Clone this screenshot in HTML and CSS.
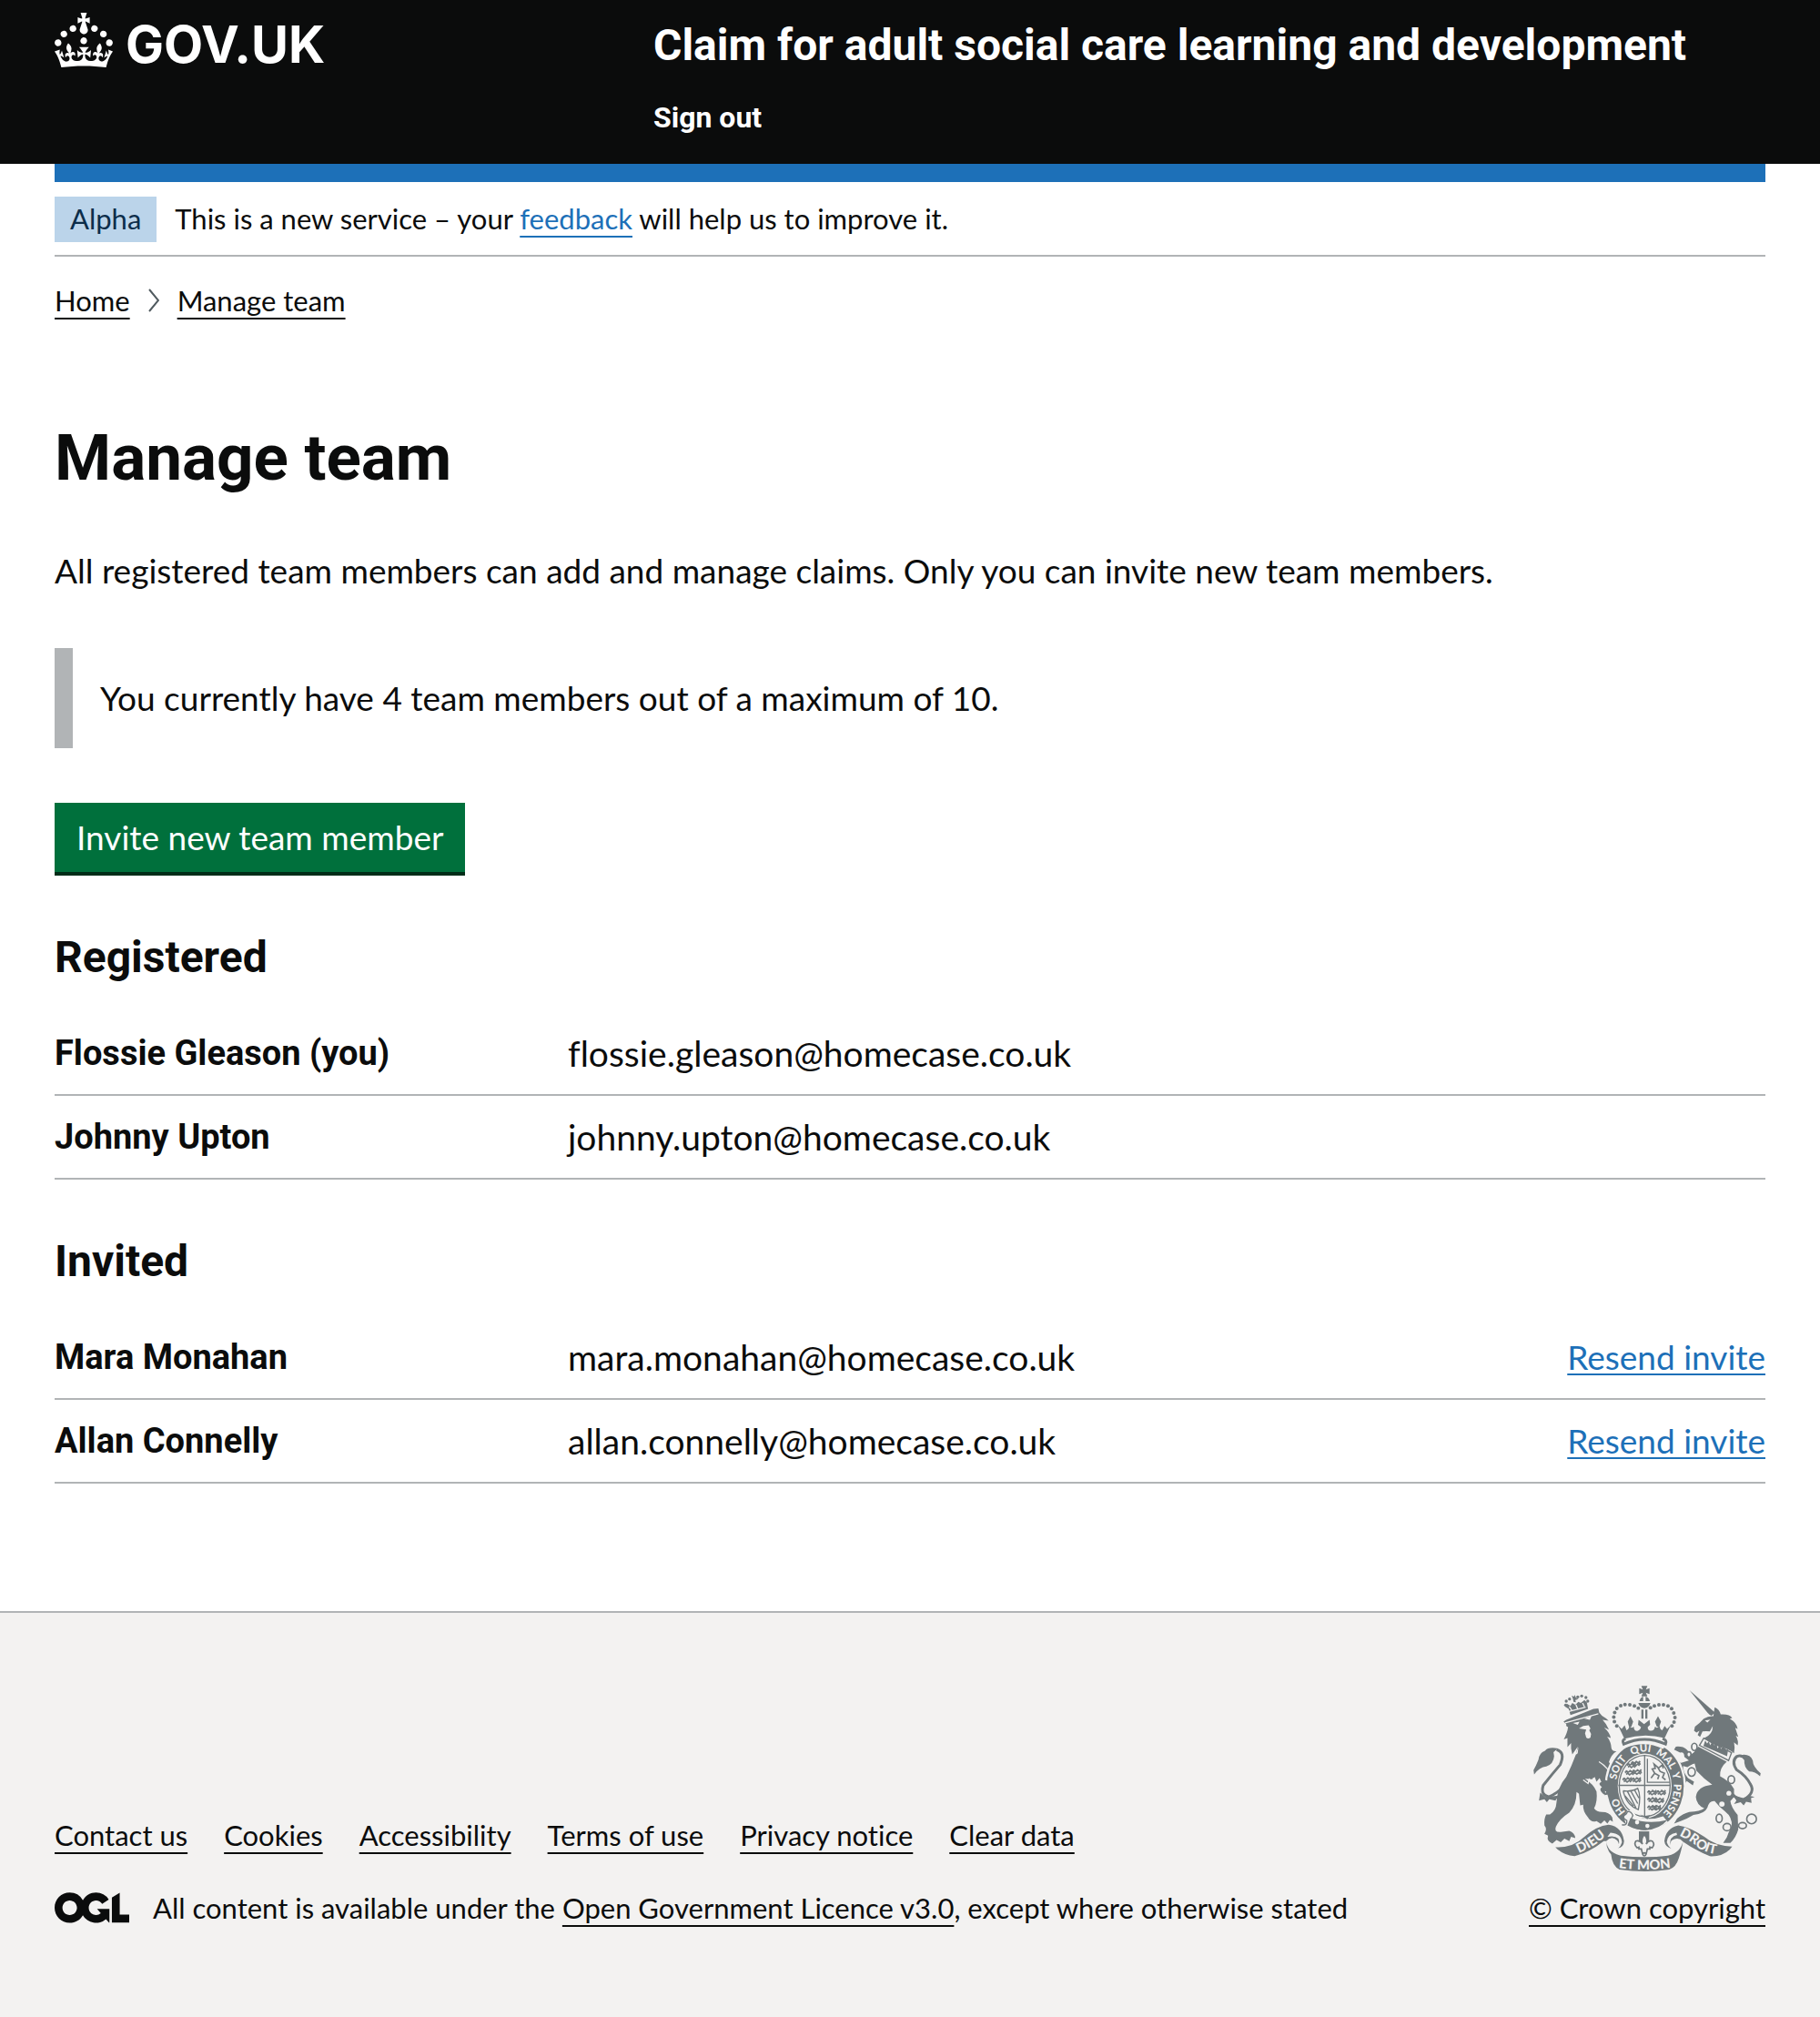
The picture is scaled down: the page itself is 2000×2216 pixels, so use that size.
FILE: index.html
```html
<!DOCTYPE html>
<html lang="en">
<head>
<meta charset="utf-8">
<meta name="viewport" content="width=device-width, initial-scale=1">
<title>Manage team – Claim for adult social care learning and development</title>
<link rel="stylesheet" href="styles.css">
</head>
<body>
<header class="header">
  <div class="header-inner">
    <a class="logo" href="#" aria-label="GOV.UK">
      <svg class="crown" viewBox="0 0 32 30" aria-hidden="true"><path d="M22.6 10.4c-1 .4-2-.1-2.4-1-.4-.9.1-2 1-2.4.9-.4 2 .1 2.4 1s-.1 2-1 2.4m-5.9 6.7c-.9.4-2-.1-2.4-1-.4-.9.1-2 1-2.4.9-.4 2 .1 2.4 1s-.1 2-1 2.4m10.8-3.7c-1 .4-2-.1-2.4-1-.4-.9.1-2 1-2.4.9-.4 2 .1 2.4 1s0 2-1 2.4m3.3 4.8c-1 .4-2-.1-2.4-1-.4-.9.1-2 1-2.4.9-.4 2 .1 2.4 1s-.1 2-1 2.4M17 4.7l2.3 1.2V2.5l-2.3.7-.2-.2.9-3h-3.4l.9 3-.2.2c-.1.1-2.3-.7-2.3-.7v3.4L15 4.7c.1.1.1.2.2.2l-1.3 4c-.1.2-.1.4-.1.6 0 1.1.8 2 1.9 2.2h.7c1-.2 1.9-1.1 1.9-2.1 0-.2 0-.4-.1-.6l-1.3-4c-.1-.2 0-.2.1-.3m-7.6 5.7c.9.4 2-.1 2.4-1 .4-.9-.1-2-1-2.4-.9-.4-2 .1-2.4 1s0 2 1 2.4m-5 3c.9.4 2-.1 2.4-1 .4-.9-.1-2-1-2.4-.9-.4-2 .1-2.4 1s.1 2 1 2.4m-3.2 4.8c.9.4 2-.1 2.4-1 .4-.9-.1-2-1-2.4-.9-.4-2 .1-2.4 1s0 2 1 2.4m14.8 11c4.4 0 8.6.3 12.3.8 1.1-4.5 2.4-7 3.7-8.8l-2.5-.9c.2 1.3.3 1.9 0 2.7-.4-.4-.8-1.1-1.1-2.3l-1.2 4c.7-.5 1.3-.8 2-.9-1.1 2.5-2.6 3.1-3.5 3-1.1-.2-1.7-1.2-1.5-2.1.3-1.2 1.5-1.5 2.1-.1 1.1-2.3-.8-3-2-2.3 1.9-1.9 2.1-3.5.6-5.6-2.1 1.6-2.1 3.2-1.2 5.5-1.2-1.4-3.2-.6-2.5 1.6.9-1.4 2.1-.5 1.9.8-.2 1.1-1.7 2.1-3.5 1.9-2.7-.2-2.9-2.1-2.9-3.6.7-.1 1.9.5 2.9 1.9l.4-4.3c-1.1 1.1-2.1 1.4-3.2 1.4.4-1.2 2.1-3 2.1-3h-5.4s1.7 1.9 2.1 3c-1.1 0-2.1-.2-3.2-1.4l.4 4.3c1-1.4 2.2-2 2.9-1.9-.1 1.5-.2 3.4-2.9 3.6-1.9.2-3.4-.8-3.5-1.9-.2-1.3 1-2.2 1.9-.8.7-2.3-1.2-3-2.5-1.6.9-2.2.9-3.9-1.2-5.5-1.5 2-1.3 3.7.6 5.6-1.2-.7-3.1 0-2 2.3.6-1.4 1.8-1.1 2.1.1.2.9-.3 1.9-1.5 2.1-.9.2-2.4-.5-3.5-3 .6 0 1.2.3 2 .9l-1.2-4c-.3 1.1-.7 1.9-1.1 2.3-.3-.8-.2-1.4 0-2.7l-2.9.9C1.3 23 2.6 25.5 3.7 30c3.7-.5 7.9-.8 12.3-.8"/></svg>
      <span class="logo-text">GOV.UK</span>
    </a>
    <div class="header-content">
      <a class="service-name" href="#">Claim for adult social care learning and development</a>
      <nav aria-label="Account"><a class="sign-out" href="#">Sign out</a></nav>
    </div>
  </div>
</header>

<div class="width-container">
  <div class="phase-banner">
    <strong class="tag">Alpha</strong>
    <span>This is a new service – your <a class="link thick" href="#">feedback</a> will help us to improve it.</span>
  </div>
  <nav class="breadcrumbs" aria-label="Breadcrumb">
    <a class="link dark thick" href="#">Home</a>
    <svg class="chevron" viewBox="0 0 12 26" aria-hidden="true"><path d="M1 1l10 12L1 25"/></svg>
    <a class="link dark thick" href="#">Manage team</a>
  </nav>

  <main class="main">
    <h1 class="title">Manage team</h1>
    <p class="body">All registered team members can add and manage claims. Only you can invite new team members.</p>
    <div class="inset">You currently have 4 team members out of a maximum of 10.</div>
    <button class="button" type="button">Invite new team member</button>

    <h2 class="subtitle">Registered</h2>
    <table class="members">
      <tbody>
        <tr><th scope="row">Flossie Gleason (you)</th><td class="email">flossie.gleason@homecase.co.uk</td><td class="action"></td></tr>
        <tr><th scope="row">Johnny Upton</th><td class="email">johnny.upton@homecase.co.uk</td><td class="action"></td></tr>
      </tbody>
    </table>

    <h2 class="subtitle">Invited</h2>
    <table class="members">
      <tbody>
        <tr><th scope="row">Mara Monahan</th><td class="email">mara.monahan@homecase.co.uk</td><td class="action"><a class="link" href="#">Resend invite</a></td></tr>
        <tr><th scope="row">Allan Connelly</th><td class="email">allan.connelly@homecase.co.uk</td><td class="action"><a class="link" href="#">Resend invite</a></td></tr>
      </tbody>
    </table>
  </main>
</div>

<footer class="footer">
  <div class="footer-inner">
    <div class="footer-meta">
      <ul class="footer-links">
        <li><a class="link dark thick" href="#">Contact us</a></li>
        <li><a class="link dark thick" href="#">Cookies</a></li>
        <li><a class="link dark thick" href="#">Accessibility</a></li>
        <li><a class="link dark thick" href="#">Terms of use</a></li>
        <li><a class="link dark thick" href="#">Privacy notice</a></li>
        <li><a class="link dark thick" href="#">Clear data</a></li>
      </ul>
      <div class="licence">
        <svg class="ogl" viewBox="0 0 483 196" aria-hidden="true"><path d="M421.5 142.8V.1l-50.7 32.3v161.1h112.4v-50.7zm-122.3-9.6A47.12 47.12 0 0 1 221 97.8c0-26 21.1-47.1 47.1-47.1 16.7 0 31.4 8.7 39.7 21.8l42.7-27.2A97.63 97.63 0 0 0 268.1 0c-36.5 0-68.3 20.1-85.1 49.7A98 98 0 0 0 97.8 0C43.9 0 0 43.9 0 97.8s43.9 97.8 97.8 97.8c36.5 0 68.3-20.1 85.1-49.7a97.76 97.76 0 0 0 149.6 25.4l19.4 22.2h3v-87.8h-80l24.3 27.5zM97.8 145c-26 0-47.1-21.1-47.1-47.1s21.1-47.1 47.1-47.1 47.1 21.1 47.1 47.1S123.8 145 97.8 145"/></svg>
        <span>All content is available under the <a class="link dark thick" href="#">Open Government Licence v3.0</a>, except where otherwise stated</span>
      </div>
    </div>
    <div class="copyright">
      <svg class="crest" viewBox="42 35 750 613" aria-hidden="true">
        <defs>
          <path id="garter" d="M410 480A95 113 0 0 1 410 253A95 113 0 0 1 410 480"/>
          <path id="motto-left" d="M180 592Q236 572 290 524"/>
          <path id="motto-right" d="M514 526Q560 546 586 570Q610 588 656 592"/>
          <path id="motto-mid" d="M310 634Q410 650 508 634"/>
          <path id="lion-mark" d="M0 6l6-5 4 4 8-5 6 4 6-6 M4 12l5-4 6 5 7-5 6 5 M2 0l5 4 M16-3l3 6 M27 2l3 8"/>
        </defs>
        <!-- Lion -->
        <path class="ink" d="M150 148Q200 128 240 112L256 110 259 124 268 134Q282 142 290 151L270 148Q282 160 291 180L275 173Q294 190 297 208L285 203Q298 220 299 240Q300 252 316 251Q298 262 291 287Q310 320 320 360L322 390 312 384 302 406Q292 410 290 392Q278 398 270 390 256 376 268 370 252 358 266 353L260 340 250 352 244 336 236 344 212 342Q240 360 250 384 254 416 242 440 250 452 268 452 292 452 302 470L304 484 294 478 286 490 276 480 264 491 250 482Q232 488 222 470 204 450 206 428L196 430 192 392 184 386Q184 430 160 454 128 474 116 500 108 520 132 518L160 514Q178 520 180 538L166 534 160 548 144 540 132 552 118 544 104 556Q84 548 90 530L78 524Q88 508 78 496 76 474 84 460L96 460Q116 450 118 420 120 370 150 336 168 300 182 262L188 236 170 262Q164 244 166 224L154 238 154 208 142 212Q154 190 156 172L150 168 150 162 141 154Z"/>
        <path class="paper" d="M172 158l22-4-6 10zM210 144l24-10-6 14zM192 176l14-8 18-2 6 10-4 6 6 12-2 12q-8 6-14 0l-4-14 4-12zM180 264l10-26-2 20z"/>
        <path class="paper-line thin" d="M146 158L256 128M258 286Q290 305 304 342M206 346l16 12 4-14 10 12 4-16"/>
        <g class="ink-line"><path d="M148 362Q120 392 92 402Q64 396 74 364Q104 326 130 296Q148 254 118 246"/></g>
        <path class="ink" d="M122 242Q90 236 80 250 60 258 58 280 50 300 42 314L44 328Q62 304 84 302 108 294 110 268L108 254zM64 388l16 14 46-4-12 16-20-4-8 10-8-10-18 4z"/>
        <path class="ink" d="M164 132L158 112 146 104 152 94 164 102 170 92 180 98 190 88 198 92 210 82 218 90 222 112z"/>
        <path class="paper-line thin" d="M158 120l56-14M160 104l8 12M182 98l6 14M204 92l6 12"/>
        <g class="ink"><circle cx="148" cy="99" r="5"/><circle cx="150" cy="86" r="5"/><circle cx="161" cy="79" r="5"/><circle cx="188" cy="72" r="5"/><circle cx="201" cy="69" r="5"/><circle cx="215" cy="74" r="5"/><circle cx="221" cy="86" r="5"/><path d="M168 68l8 3 2-6 4 10 8 4-10 3 2 8-8-2-2-10z"/></g>
        <!-- Unicorn -->
        <path class="ink" d="M557 50L641 124 630 134Q622 132 616 124zM640 106Q656 112 660 130Q690 128 698 142L690 144Q714 158 716 178L708 174 718 204 710 200Q720 218 716 232L704 222Q708 240 704 258 690 246 664 238 622 226 606 208 634 196 634 168L624 186Q612 184 600 186L592 204 584 198 590 184 580 190 572 184 575 170Q592 158 604 144 620 134 636 136z"/>
        <path class="paper" d="M608 150l18-3-10 10z"/>
        <path class="ink-line thin" d="M604 208L696 256L686 282L590 232Z"/>
        <path class="ink" d="M603 234l6-18 6 10 6-8 4 14 8-14 6 14 8-6 2 16 8-10 4 12 10-6 8 12 6-6-4 24z"/>
        <path class="ink" d="M586 236L680 286Q656 306 658 334 690 350 704 376L704 402 692 416Q694 436 716 462L718 510Q710 538 692 554L668 554 680 536Q686 518 696 500 700 470 674 450 654 434 640 416 622 414 616 438 608 458 570 462L548 474 528 482 506 490 516 474Q534 458 556 452 592 450 606 440 580 428 578 402 582 368 632 362 606 344 580 316L574 292 560 296 556 278Q566 262 586 236z"/>
        <path class="ink" d="M580 250L560 286 540 270Q540 252 526 256L506 246 512 236Q536 234 548 246L562 262zM576 288L550 304 536 300Q534 318 552 340L572 352 568 364 548 350 542 358 524 346 530 336 514 304 500 294 502 284 530 290 554 282z"/>
        <path class="ink-line" d="M690 380Q704 408 736 412Q776 388 758 360Q744 332 712 312Q694 284 714 268Q730 262 742 278"/>
        <path class="ink" d="M726 264Q756 258 766 282 766 302 792 324L790 334Q774 318 754 318 736 304 738 280zM700 396l12 18-8 12 22-6 10 10 8-12 18 4-2-16 12-4-20-4-18 8z"/>
        <g class="ring"><ellipse cx="573" cy="237" rx="9" ry="12"/><ellipse cx="555" cy="262" rx="7" ry="9"/><ellipse cx="564" cy="320" rx="12" ry="14"/><ellipse cx="695" cy="345" rx="11" ry="13"/><ellipse cx="655" cy="473" rx="10" ry="14"/><ellipse cx="681" cy="502" rx="13" ry="12"/><ellipse cx="732" cy="497" rx="13" ry="10"/><circle cx="762" cy="475" r="16"/></g>
        <g class="paper"><circle cx="687" cy="390" r="8"/><circle cx="664" cy="426" r="9"/></g>
        <!-- Garter and shield -->
        <ellipse class="paper" cx="411" cy="366" rx="134" ry="153"/>
        <ellipse class="ink" cx="411" cy="366" rx="127" ry="146"/>
        <ellipse class="paper" cx="409" cy="366" rx="89" ry="107"/>
        <ellipse class="ink-line thin" cx="409" cy="366" rx="84" ry="101"/>
        <path class="ink-line thin" d="M409 264V468M322 364H494M418 276V354H492"/>
        <g class="charge"><use href="#lion-mark" x="350" y="292"/><use href="#lion-mark" x="364" y="286"/><use href="#lion-mark" x="344" y="316"/><use href="#lion-mark" x="368" y="314"/><use href="#lion-mark" x="336" y="340"/><use href="#lion-mark" x="366" y="340"/><use href="#lion-mark" x="418" y="382"/><use href="#lion-mark" x="448" y="382"/><use href="#lion-mark" x="418" y="406"/><use href="#lion-mark" x="442" y="408"/><use href="#lion-mark" x="418" y="432"/><use href="#lion-mark" x="432" y="432"/><path d="M430 340l12-16-8-14 10-2-4-14 12 10 8 14 14 6-6 14 10 8M442 324l14 8-4 12M456 306l12-10 2 12"/></g>
        <path class="ink-line thin" d="M338 382Q366 386 386 374Q398 400 388 444Q348 430 338 382M352 384l28 54M364 384l22 40M376 380l14 26M344 398l28 34"/>
        <g class="motto garter-motto">
          <text><textPath href="#garter" startOffset="15%">HO</textPath></text>
          <text><textPath href="#garter" startOffset="34%">SOIT</textPath></text>
          <text><textPath href="#garter" startOffset="48%">QUI</textPath></text>
          <text><textPath href="#garter" startOffset="61%">MAL</textPath></text>
          <text><textPath href="#garter" startOffset="70%">Y</textPath></text>
          <text><textPath href="#garter" startOffset="82%">PENSE</textPath></text>
        </g>
        <path class="paper" d="M340 470L352 446 372 448 380 464Q420 484 470 466L486 486 440 516 350 500z"/>
        <path class="ink" d="M362 472Q420 494 484 478Q460 508 412 512Q376 510 352 496zM394 460q16 8 34 2l-10 14z"/>
        <path class="ink-line thin" d="M334 494q18 4 16-14-16-8-8-18 8-2 10-12 14 0 18 14l-6 12"/>
        <g class="paper"><circle cx="384" cy="486" r="7"/><circle cx="418" cy="498" r="7"/></g>
        <path class="ink" d="M272 344l16 6 14 12 18 24-4 12-10-10-4 18-12-12-14 2 6-12-14-4 8-8-12-8z"/>
        <!-- Royal crown -->
        <path class="paper" d="M326 176L490 176 470 206 484 226 470 244Q410 214 346 240L334 226 342 208z"/>
        <path class="ink" d="M321 166l12 12 10-12 6 16q10-4 8-14l10 6 6-4q0 16 14 14 8-2 10-12l-10-8 2-16 18 14 18-14 2 16-8 8q0 12 10 12 12 0 14-14l6 4 10-6q0 12 8 14l8-14 8 10 12-12-20 42Q408 190 342 210z"/>
        <path class="ink" d="M362 136l9 18-6 16h-8l-4-16zM453 136l10 18-6 16h-8l-6-16z"/>
        <path class="ink-line" d="M346 210Q332 214 340 228Q408 196 478 228Q484 214 468 210"/>
        <g class="ink"><circle cx="317" cy="168" r="6"/><circle cx="309" cy="154" r="6"/><circle cx="307" cy="139" r="6"/><circle cx="310" cy="124" r="6"/><circle cx="317" cy="110" r="6"/><circle cx="330" cy="101" r="6"/><circle cx="344" cy="97" r="6"/><circle cx="360" cy="98" r="6"/><circle cx="375" cy="102" r="6"/><circle cx="388" cy="109" r="6"/><circle cx="499" cy="168" r="6"/><circle cx="506" cy="155" r="6"/><circle cx="509" cy="140" r="6"/><circle cx="505" cy="125" r="6"/><circle cx="498" cy="111" r="6"/><circle cx="486" cy="102" r="6"/><circle cx="471" cy="98" r="6"/><circle cx="456" cy="98" r="6"/><circle cx="441" cy="102" r="6"/><circle cx="428" cy="108" r="6"/>
          <path d="M388 92H428Q424 108 408 109Q392 108 388 92zM392 86q2-12 12-15v15zM412 71q12 3 14 15h-14zM398 36h20l-5 12 12-5v20l-12-5 5 12H398l5-12-12 5V43l12 5zM398 114h7v30h-7zM411 114h7v30h-7z"/></g>
        <!-- Ribbon -->
        <path class="ink" d="M114 568Q170 572 210 534 250 498 290 494 334 500 341 548 340 570 318 572 330 560 318 546 300 528 282 548L274 548Q226 586 178 598 138 594 114 568zM698 566Q640 564 606 534 560 502 520 496 478 506 474 548 476 568 500 574 488 560 498 546 520 532 536 550 576 578 624 598 674 600 698 566zM282 548Q286 586 330 596 410 606 486 596 526 588 536 548 530 580 522 604 512 636 490 642 410 654 326 642 302 632 298 592 282 574 282 548z"/>
        <path class="paper" d="M296 520Q332 522 334 552 330 568 312 580 286 572 290 548 304 534 318 550 324 560 314 570 330 560 322 540 310 528 286 534zM514 520Q484 524 482 552 488 570 506 580 532 572 528 552 514 536 500 550 494 560 502 570 488 560 496 540 504 530 516 528z"/>
        <path class="ink" d="M390 516h34v34h-34z"/>
        <path class="emblem" d="M408 526Q394 542 402 558 392 544 380 548 372 560 384 570L390 568 390 574H398L402 590H414L418 574H426V568L434 570Q444 558 434 548 422 544 414 558 422 542 408 526z"/><circle class="emblem" cx="408" cy="592" r="5"/>
        <g class="motto">
          <text><textPath href="#motto-left" startOffset="50%">DIEU</textPath></text>
          <text><textPath href="#motto-mid" startOffset="50%">ET MON</textPath></text>
          <text><textPath href="#motto-right" startOffset="49%">DROIT</textPath></text>
        </g>
      </svg>
      <a class="link dark thick" href="#">© Crown copyright</a>
    </div>
  </div>
</footer>
</body>
</html>
```
FILE: styles.css
```css
* { box-sizing: border-box; }

body {
  margin: 0;
  display: flex;
  flex-direction: column;
  min-height: 100vh;
  background: #fff;
  color: #0b0c0c;
  font-family: Lato, "Liberation Sans", Arial, sans-serif;
  font-size: 37px;
  font-variant-ligatures: none;
  line-height: 50px;
}

.service-name,
.sign-out,
.title,
.subtitle,
.members th {
  font-family: Roboto, "Liberation Sans", Arial, sans-serif;
  font-weight: 700;
}

.header {
  background: #0b0c0c;
  color: #fff;
}

.header a {
  color: #fff;
  text-decoration: none;
}

.header-inner {
  display: grid;
  grid-template-columns: 35% 1fr;
  min-height: 180px;
  margin: 0 60px;
}

.logo {
  display: flex;
  align-items: flex-start;
  gap: 14px;
  padding-top: 14px;
}

.crown {
  width: 64px;
  height: 60px;
  fill: #fff;
}

.logo-text {
  font-family: Inter, Arial, sans-serif;
  font-size: 56px;
  font-weight: 700;
  line-height: 70px;
}

.header-content {
  padding-top: 20px;
}

.service-name {
  display: block;
  font-size: 48px;
  line-height: 60px;
}

.sign-out {
  display: block;
  margin-top: 29px;
  font-size: 32px;
  line-height: 40px;
}

.width-container {
  flex: 1;
  margin: 0 60px;
}

.phase-banner {
  display: flex;
  align-items: flex-start;
  gap: 20px;
  border-top: 20px solid #1d70b8;
  border-bottom: 2px solid #b1b4b6;
  padding: 16px 0 14px;
  font-size: 31px;
  line-height: 48px;
}

.tag {
  background: #bbd4ea;
  color: #0c2d4a;
  font-weight: 400;
  padding: 0 17px 2px;
}

.link {
  color: #1d70b8;
  text-decoration: underline;
  text-decoration-thickness: 2px;
  text-underline-offset: 4px;
  text-decoration-skip-ink: auto;
}

.thick {
  text-underline-offset: 7px;
  text-decoration-skip-ink: none;
}

.dark { color: #0b0c0c; }

.breadcrumbs {
  display: flex;
  align-items: center;
  gap: 20px;
  margin-top: 28px;
  font-size: 31px;
  line-height: 40px;
}

.chevron {
  width: 12px;
  height: 26px;
  fill: none;
  stroke: #505a5f;
  stroke-width: 2;
}

.main {
  padding: 114px 0 80px;
}

.title {
  margin: 0 0 60px;
  font-size: 71px;
  line-height: 78px;
}

.body { margin: 0 0 60px; }

.inset {
  margin-bottom: 60px;
  border-left: 20px solid #b1b4b6;
  padding: 30px;
}

.button {
  display: block;
  margin: 0 0 60px;
  border: 0;
  border-bottom: 4px solid #002d18;
  padding: 13px 24px;
  background: #00703c;
  color: #fff;
  font: inherit;
  line-height: 50px;
}

.subtitle {
  margin: 0 0 29px;
  font-size: 48px;
  line-height: 60px;
}

.members {
  width: 100%;
  margin-bottom: 60px;
  border-collapse: collapse;
  table-layout: fixed;
}

.members th,
.members td {
  height: 92px;
  border-bottom: 2px solid #b1b4b6;
  padding: 20px 0;
  text-align: left;
}

.members th {
  width: 30%;
  font-size: 38px;
}

.members .email {
  font-size: 39px;
}

.members .action {
  width: 20%;
  text-align: right;
}

.footer {
  border-top: 2px solid #b1b4b6;
  background: #f3f2f1;
  font-size: 31px;
  line-height: 40px;
}

.footer-inner {
  display: flex;
  align-items: flex-end;
  justify-content: space-between;
  padding: 80px 60px 100px;
}

.footer-links {
  display: flex;
  gap: 40px;
  margin: 0 0 40px;
  padding: 0;
  list-style: none;
}

.licence {
  display: flex;
  align-items: center;
  gap: 26px;
}

.ogl {
  width: 82px;
  height: 34px;
  fill: #0b0c0c;
}

.copyright {
  display: flex;
  flex-direction: column;
  align-items: center;
  gap: 20px;
}

.crest {
  width: 250px;
  height: 204px;
}

.ink { fill: #70787b; }
.paper { fill: #f3f2f1; }
.ink-line, .ring, .charge { fill: none; stroke: #70787b; stroke-width: 9; }
.ring { fill: #f3f2f1; stroke-width: 5; }
.charge { stroke-width: 5; }
.paper-line { fill: none; stroke: #f3f2f1; }
.thin { stroke-width: 4; }
.emblem { fill: #f3f2f1; stroke: #70787b; stroke-width: 5; }

.motto {
  fill: #f3f2f1;
  font-family: Lato, sans-serif;
  font-size: 44px;
  font-weight: 900;
  text-anchor: middle;
}

.garter-motto {
  font-size: 34px;
}
```
